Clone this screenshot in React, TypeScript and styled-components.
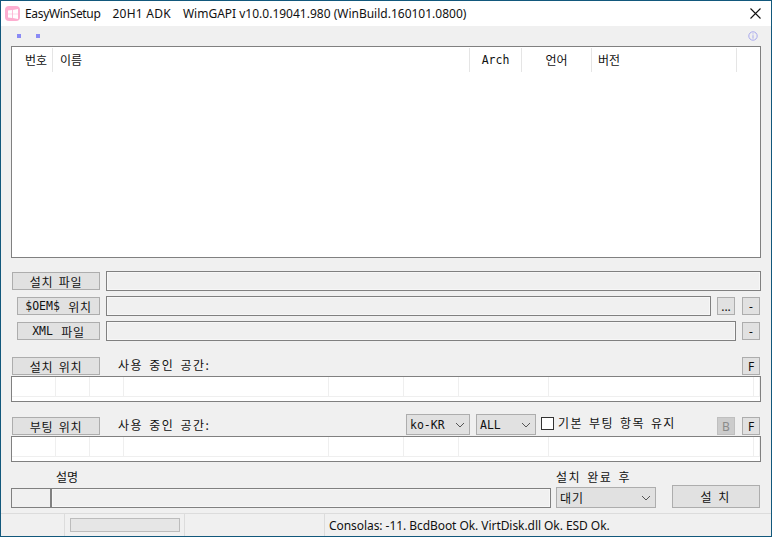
import styled, { createGlobalStyle } from "styled-components"

const KR = `"Noto Sans CJK KR", "Noto Sans", sans-serif`
const UI = `"Noto Sans", "Noto Sans CJK KR", sans-serif`
const MONO = `"DejaVu Sans Mono", "Noto Sans CJK KR", monospace`

const GlobalStyle = createGlobalStyle`
  html, body {
    margin: 0;
    padding: 0;
    background: #f0f0f0;
  }
  * {
    box-sizing: border-box;
  }
`

function Chevron() {
  return (
    <ChevronIcon width="10" height="6" viewBox="0 0 10 6">
      <path d="M1 1 L5 5 L9 1" fill="none" stroke="#555" strokeWidth="1" />
    </ChevronIcon>
  )
}

function Drive() {
  return (
    <DriveTable>
      <DriveRow>
        {[44, 34, 34, 205, 75, 55, 90, 205, 0].map((w, i) => (
          <DriveCell key={i} $w={w} />
        ))}
      </DriveRow>
    </DriveTable>
  )
}

export default function App() {
  return (
    <Window>
      <GlobalStyle />
      <TitleBar>
        <AppIcon>
          <svg width="10" height="10" viewBox="0 0 10 10">
            <path d="M0 1.5 L4 1 V4.7 H0 Z M4.8 0.9 L10 0 V4.7 H4.8 Z M0 5.3 H4 V9 L0 8.5 Z M4.8 5.3 H10 V10 L4.8 9.1 Z" fill="#fff" />
          </svg>
        </AppIcon>
        <AppName>EasyWinSetup</AppName>
        <AdkName>20H1 ADK</AdkName>
        <Title>WimGAPI v10.0.19041.980 (WinBuild.160101.0800)</Title>
        <CloseIcon width="11" height="11" viewBox="0 0 11 11">
          <path d="M0.5 0.5 L10.5 10.5 M10.5 0.5 L0.5 10.5" stroke="#111" strokeWidth="1.1" fill="none" />
        </CloseIcon>
      </TitleBar>

      <Body>
        <MarkerBar>
          <Marker />
          <Marker />
          <InfoIcon width="10" height="10" viewBox="0 0 10 10">
            <circle cx="5" cy="5" r="4.2" fill="none" stroke="#a9a9ee" />
            <path d="M5 4.2 V7.6 M5 2.4 V3.4" stroke="#a9a9ee" />
          </InfoIcon>
        </MarkerBar>

        <ListBox>
          <ListHead>
            <HeadCell $w={41} $align="right">번호</HeadCell>
            <HeadCell $w={417} $pad={7}>이름</HeadCell>
            <HeadCell $w={52} $align="center" $mono>Arch</HeadCell>
            <HeadCell $w={70} $align="center">언어</HeadCell>
            <HeadCell $w={145} $pad={6}>버전</HeadCell>
          </ListHead>
        </ListBox>

        <FileRow $top={13}>
          <LongButton>설치 파일</LongButton>
          <Field />
        </FileRow>
        <FileRow $top={5}>
          <ShortButton><Latin>$OEM$</Latin> 위치</ShortButton>
          <Field />
          <SmallButton $first>...</SmallButton>
          <SmallButton>-</SmallButton>
        </FileRow>
        <FileRow $top={5}>
          <ShortButton><Latin>XML</Latin> 파일</ShortButton>
          <Field />
          <SmallButton $first>-</SmallButton>
        </FileRow>

        <SectionHead $top={17}>
          <LongButton>설치 위치</LongButton>
          <Label>사용 중인 공간:</Label>
          <Spacer />
          <SmallButton>F</SmallButton>
        </SectionHead>
        <Drive />

        <SectionHead $top={16}>
          <LongButton>부팅 위치</LongButton>
          <Label>사용 중인 공간:</Label>
          <Spacer />
          <Select $w={64}><Latin>ko-KR</Latin><Chevron /></Select>
          <Select $w={60} $gap={6}><Latin>ALL</Latin><Chevron /></Select>
          <CheckBox />
          <CheckLabel>기본 부팅 항목 유지</CheckLabel>
          <SmallButton $disabled>B</SmallButton>
          <SmallButton>F</SmallButton>
        </SectionHead>
        <Drive />

        <CaptionRow>
          <DescCaption>설명</DescCaption>
          <AfterCaption>설치 완료 후</AfterCaption>
        </CaptionRow>
        <BottomRow>
          <IdField />
          <DescField />
          <Select $w={100} $gap={5}><AfterText>대기</AfterText><Chevron /></Select>
          <InstallButton>설 치</InstallButton>
        </BottomRow>
      </Body>

      <StatusBar>
        <StatusCell $w={64} />
        <StatusCell $w={120}><Progress /></StatusCell>
        <StatusCell $w={140} />
        <StatusText>Consolas: -11. BcdBoot Ok. VirtDisk.dll Ok. ESD Ok.</StatusText>
      </StatusBar>
    </Window>
  )
}

const Window = styled.div`
  width: 772px;
  height: 537px;
  display: flex;
  flex-direction: column;
  border: 1px solid #12587c;
  background: #f0f0f0;
  color: #111;
  overflow: hidden;
`

const TitleBar = styled.div`
  height: 25px;
  flex: none;
  background: #fff;
  display: flex;
  align-items: center;
  padding-left: 4px;
`

const AppIcon = styled.div`
  width: 15px;
  height: 15px;
  border-radius: 4px;
  background: #fdaed0;
  display: flex;
  align-items: center;
  justify-content: center;
  margin-right: 5px;
`

const Title = styled.span`
  font: 12px ${UI};
  white-space: nowrap;
`

const AppName = styled(Title)`
  letter-spacing: -0.33px;
  margin-right: 12px;
`

const AdkName = styled(Title)`
  letter-spacing: 0.25px;
  margin-right: 12px;
`

const CloseIcon = styled.svg`
  margin-left: auto;
  margin-right: 10px;
`

const Body = styled.div`
  flex: 1;
  display: flex;
  flex-direction: column;
  padding: 0 10px;
`

const MarkerBar = styled.div`
  height: 20px;
  flex: none;
  display: flex;
  align-items: center;
  gap: 15px;
  padding-left: 6px;
`

const Marker = styled.span`
  width: 4px;
  height: 4px;
  background: #8a8af5;
`

const InfoIcon = styled.svg`
  margin-left: auto;
  margin-right: 3px;
`

const ListBox = styled.div`
  height: 212px;
  flex: none;
  background: #fff;
  border: 1px solid #808080;
`

const ListHead = styled.div`
  display: flex;
  height: 24px;
  margin-top: 1px;
`

const HeadCell = styled.div<{ $w: number; $align?: string; $pad?: number; $mono?: boolean }>`
  width: ${(p) => p.$w}px;
  flex: none;
  border-right: 1px solid #e5e5e5;
  font: ${(p) => (p.$mono ? `11.5px ${MONO}` : `12px ${KR}`)};
  line-height: ${(p) => (p.$mono ? 25 : 23)}px;
  padding-left: ${(p) => p.$pad ?? 0}px;
  text-align: ${(p) => p.$align ?? "left"};
  padding-right: ${(p) => (p.$align === "right" ? 5 : 0)}px;
`

const FileRow = styled.div<{ $top: number }>`
  height: 20px;
  flex: none;
  margin-top: ${(p) => p.$top}px;
  display: flex;
  align-items: center;
  justify-content: flex-end;
`

const ButtonBase = styled.div`
  height: 18px;
  flex: none;
  background: #e1e1e1;
  border: 1px solid #adadad;
  font: 12px ${KR};
  letter-spacing: 0.7px;
  word-spacing: 2px;
  display: flex;
  align-items: center;
  justify-content: center;
  gap: 3px;
  white-space: pre;
`

const LongButton = styled(ButtonBase)`
  width: 88px;
  margin-left: 1px;
`

const ShortButton = styled(ButtonBase)`
  width: 83px;
  margin-left: 6px;
`

const SmallButton = styled(ButtonBase)<{ $disabled?: boolean; $first?: boolean }>`
  width: 18px;
  margin-left: ${(p) => (p.$first ? 6 : 7)}px;
  font: 12px ${UI};
  letter-spacing: 0;
  background: ${(p) => (p.$disabled ? "#cccccc" : "#e1e1e1")};
  color: ${(p) => (p.$disabled ? "#8a8a8a" : "#111")};
  border-color: ${(p) => (p.$disabled ? "#bfbfbf" : "#adadad")};

  &:last-child {
    margin-right: 1px;
  }
`

const Latin = styled.span`
  font: 11.5px ${MONO};
  letter-spacing: 0;
`

const Field = styled.div`
  flex: 1;
  height: 20px;
  margin-left: 6px;
  background: #f0f0f0;
  border: 1px solid #808080;
  box-shadow: inset 0 0 0 1px #f7f7f7;
`

const SectionHead = styled.div<{ $top: number }>`
  height: 24px;
  flex: none;
  margin-top: ${(p) => p.$top - 6}px;
  display: flex;
  align-items: flex-end;
  padding-bottom: 1px;
`

const Label = styled.span`
  font: 12px/18px ${KR};
  letter-spacing: 1.5px;
  word-spacing: 2px;
  margin-left: 18px;
  margin-bottom: 1px;
`

const Spacer = styled.div`
  flex: 1;
`

const DriveTable = styled.div`
  height: 26px;
  flex: none;
  background: #fff;
  border: 1px solid #808080;
`

const DriveRow = styled.div`
  height: 20px;
  display: flex;
  border-bottom: 1px solid #efefef;
`

const DriveCell = styled.div<{ $w: number }>`
  width: ${(p) => p.$w}px;
  flex: ${(p) => (p.$w ? "none" : "1")};
  border-right: 1px solid #efefef;
`

const Select = styled.div<{ $w: number; $gap?: number }>`
  width: ${(p) => p.$w}px;
  height: 21px;
  flex: none;
  margin-left: ${(p) => p.$gap ?? 0}px;
  background: #e1e1e1;
  border: 1px solid #adadad;
  padding: 0 4px 0 3px;
  display: flex;
  align-items: center;
  justify-content: space-between;
`

const ChevronIcon = styled.svg`
  flex: none;
`

const CheckBox = styled.div`
  width: 13px;
  height: 13px;
  flex: none;
  margin: 0 4px 5px 5px;
  background: #fff;
  border: 1px solid #333;
`

const CheckLabel = styled.span`
  font: 12px/18px ${KR};
  letter-spacing: 1.4px;
  word-spacing: 2px;
  margin-bottom: 3px;
  width: 152px;
  white-space: nowrap;
`

const CaptionRow = styled.div`
  height: 26px;
  flex: none;
  display: flex;
  align-items: flex-end;
  font: 12px/18px ${KR};
  padding-bottom: 2px;
`

const DescCaption = styled.span`
  margin-left: 45px;
  width: 500px;
`

const AfterCaption = styled.span`
  letter-spacing: 1.5px;
  word-spacing: 2px;
`

const BottomRow = styled.div`
  height: 20px;
  flex: none;
  display: flex;
  align-items: flex-end;
`

const IdField = styled.div`
  width: 40px;
  height: 20px;
  flex: none;
  border: 1px solid #808080;
  background: #f0f0f0;
`

const DescField = styled(IdField)`
  width: 501px;
  margin-left: -1px;
  border-left-width: 2px;
  box-shadow: inset 0 0 0 1px #f7f7f7;
`

const AfterText = styled.span`
  font: 12px ${KR};
  letter-spacing: 1px;
`

const InstallButton = styled(ButtonBase)`
  width: 88px;
  height: 23px;
  margin-left: 16px;
  letter-spacing: 2px;
  word-spacing: 0;
`

const StatusBar = styled.div`
  height: 23px;
  flex: none;
  margin-top: auto;
  border-top: 1px solid #dcdcdc;
  display: flex;
  align-items: stretch;
`

const StatusCell = styled.div<{ $w: number }>`
  width: ${(p) => p.$w}px;
  flex: none;
  border-right: 1px solid #dcdcdc;
  display: flex;
  align-items: center;
  justify-content: center;
`

const Progress = styled.div`
  width: 110px;
  height: 14px;
  background: #e6e6e6;
  border: 1px solid #bcbcbc;
`

const StatusText = styled.span`
  font: 12px/23px ${UI};
  letter-spacing: -0.06px;
  padding-left: 4px;
  white-space: nowrap;
`
